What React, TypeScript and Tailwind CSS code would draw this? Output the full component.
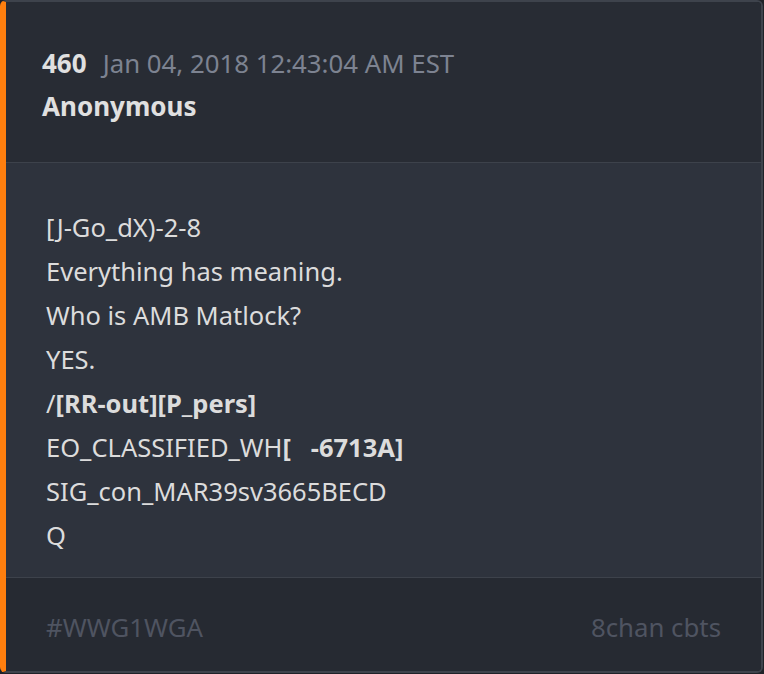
export default function App() {
  const lines = [
    { t: '[J-Go_dX)-2-8' },
    { t: 'Everything has meaning.' },
    { t: 'Who is AMB Matlock?' },
    { t: 'YES.' },
  ];
  return (
    <div className="w-[764px] h-[674px] bg-[#1f2228] font-['Noto_Sans',sans-serif]">
      <div className="h-[673px] w-[763px] flex flex-col rounded-md border-2 border-[#3e434c] border-l-[6px] border-l-[#ff7f0e] overflow-hidden">
        <div className="bg-[#282c34] pl-[36px] pt-[39px] pb-[35px] border-b border-[#3d424b]">
          <div className="flex items-baseline gap-[16px] text-[26px] leading-[44px]">
            <span className="font-bold text-[#e0e0e0]">460</span>
            <span className="text-[25.8px] text-[#7d8391]">Jan 04, 2018 12:43:04 AM EST</span>
          </div>
          <div className="text-[26px] leading-[42px] font-bold text-[#e0e0e0]">Anonymous</div>
        </div>
        <div className="bg-[#2e333d] pl-[40px] pt-[42px] pb-[20px] text-[25.5px] leading-[44px] text-[#dcdcdc] border-b border-[#3d424b]">
          {lines.map((l, i) => (
            <div key={i}>{l.t}</div>
          ))}
          <div>
            /<span className="font-bold">[RR-out][P_pers]</span>
          </div>
          <div>
            EO_CLASSIFIED_WH<span className="font-bold">[&nbsp;&nbsp;&nbsp;-6713A]</span>
          </div>
          <div>SIG_con_MAR39sv3665BECD</div>
          <div>Q</div>
        </div>
        <div className="flex-1 bg-[#262a32] flex items-center justify-between pl-[40px] pr-[40px] pt-[6px] text-[25.8px] text-[#4f5461]">
          <span>#WWG1WGA</span>
          <span>8chan cbts</span>
        </div>
      </div>
    </div>
  );
}
